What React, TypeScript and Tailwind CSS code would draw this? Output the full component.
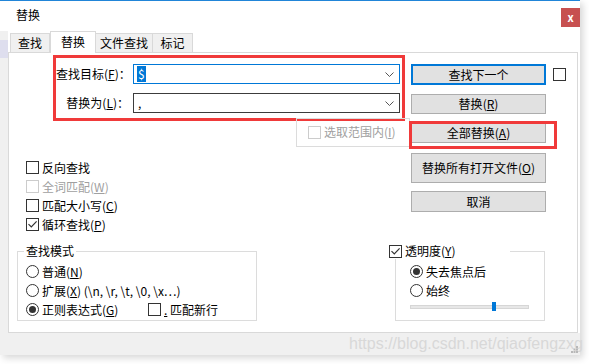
import React from "react";

const U = ({ k }: { k: string }) => (
  <span>
    (<span className="underline">{k}</span>)
  </span>
);

function Box({ checked, disabled }: { checked?: boolean; disabled?: boolean }) {
  return (
    <span
      className={
        disabled
          ? "w-[13px] h-[13px] border border-[#cccccc] bg-white flex items-center justify-center shrink-0"
          : "w-[13px] h-[13px] border border-[#333333] bg-white flex items-center justify-center shrink-0"
      }
    >
      {checked && (
        <svg width="11" height="11" viewBox="0 0 11 11">
          <path d="M1.5 5.2 L4.3 8 L9.6 2.4" stroke="#333333" strokeWidth="1.2" fill="none" />
        </svg>
      )}
    </span>
  );
}

function Radio({ checked }: { checked?: boolean }) {
  return (
    <span className="w-[13px] h-[13px] rounded-full border border-[#333333] bg-white flex items-center justify-center shrink-0">
      {checked && <span className="w-[7px] h-[7px] rounded-full bg-[#333333]" />}
    </span>
  );
}

function Chevron() {
  return (
    <svg width="9" height="5" viewBox="0 0 9 5" className="shrink-0">
      <path d="M0.5 0.5 L4.5 4.5 L8.5 0.5" stroke="#555555" strokeWidth="1" fill="none" />
    </svg>
  );
}

export default function App() {
  return (
    <div
      className="w-[589px] h-[364px] bg-white overflow-hidden text-[12px] leading-[16px] text-black"
      style={{ fontFamily: '"Noto Sans CJK SC", "Noto Sans", sans-serif' }}
    >
      <div className="w-[580px] h-[355px] flex flex-col bg-white border-t border-[#2185d8] shadow-[3px_3px_7px_rgba(0,0,0,0.16)]">
        {/* title bar */}
        <div className="h-[30px] flex justify-between shrink-0">
          <div className="pl-[16px] pt-[6px] text-[12px]">替换</div>
          <div className="mt-[7px] w-[19px] h-[19px] bg-[#c75050] flex items-center justify-center text-white font-bold text-[11px] leading-none">
            x
          </div>
        </div>
        <div className="flex flex-1">
          {/* left frame strip */}
          <div className="w-[8px] bg-[#f0f0f0] shrink-0">
            <div className="mt-[9px] h-[18px] bg-[#dedeee]" />
          </div>
          <div className="w-[572px] flex flex-col">
            {/* tabs */}
            <div className="h-[21px] flex items-end pl-[2px] relative z-10">
              <div className="w-[40px] h-[19px] bg-[#f0f0f0] border border-b-0 border-[#d9d9d9] flex items-center justify-center">
                查找
              </div>
              <div className="w-[46px] h-[22px] -mb-[1px] bg-white border border-b-0 border-[#d9d9d9] flex items-center justify-center pb-[2px]">
                替换
              </div>
              <div className="w-[57px] h-[19px] bg-[#f0f0f0] border border-b-0 border-l-0 border-[#d9d9d9] flex items-center justify-center">
                文件查找
              </div>
              <div className="w-[40px] h-[19px] bg-[#f0f0f0] border border-b-0 border-l-0 border-[#d9d9d9] flex items-center justify-center">
                标记
              </div>
            </div>
            {/* panel */}
            <div className="w-[570px] h-[281px] border border-[#d9d9d9] bg-white flex flex-col">
              <div className="h-[187px] flex">
                {/* left column */}
                <div className="w-[402px] flex flex-col">
                  <div className="ml-[44px] mt-[2px] w-[352px] h-[66px] border-[3px] border-[#f03a3a] flex flex-col pt-[6px] gap-[9px]">
                    <div className="flex items-center">
                      <div className="w-[73px] text-right whitespace-nowrap">
                        查找目标<U k="F" />：
                      </div>
                      <div className="ml-[4px] w-[267px] h-[20px] border border-[#0078d7] flex items-center justify-between pl-[3px] pr-[5px]">
                        <span className="bg-[#0078d7] text-white px-[1px] leading-[16px]">$</span>
                        <Chevron />
                      </div>
                    </div>
                    <div className="flex items-center">
                      <div className="w-[73px] text-right whitespace-nowrap">
                        替换为<U k="L" />：
                      </div>
                      <div className="ml-[4px] w-[267px] h-[20px] border border-[#3c3c3c] flex items-center justify-between pl-[4px] pr-[5px]">
                        <span className="leading-[16px]">,</span>
                        <Chevron />
                      </div>
                    </div>
                  </div>
                  <div className="ml-[287px] -mt-[3px] w-[114px] h-[29px] border border-[#dcdcdc] flex items-start pl-[11px] pt-[7px] gap-[3px]">
                    <Box disabled />
                    <span className="text-[#a0a0a0] -mt-[2px] whitespace-nowrap">
                      选取范围内<U k="I" />
                    </span>
                  </div>
                  <div className="ml-[17px] mt-[11px] flex flex-col">
                    <div className="h-[19px] flex items-center gap-[3px]">
                      <Box />
                      <span>反向查找</span>
                    </div>
                    <div className="h-[19px] flex items-center gap-[3px]">
                      <Box disabled />
                      <span className="text-[#a0a0a0]">
                        全词匹配<U k="W" />
                      </span>
                    </div>
                    <div className="h-[19px] flex items-center gap-[3px]">
                      <Box />
                      <span>
                        匹配大小写<U k="C" />
                      </span>
                    </div>
                    <div className="h-[19px] flex items-center gap-[3px]">
                      <Box checked />
                      <span>
                        循环查找<U k="P" />
                      </span>
                    </div>
                  </div>
                </div>
                {/* right column */}
                <div className="flex flex-col pt-[11px]">
                  <div className="flex items-center">
                    <div className="w-[135px] h-[21px] bg-[#e1e1e1] border-2 border-[#0078d7] flex items-center justify-center">
                      查找下一个
                    </div>
                    <div className="ml-[7px]">
                      <Box />
                    </div>
                  </div>
                  <div className="mt-[9px] w-[135px] h-[20px] bg-[#e1e1e1] border border-[#adadad] flex items-center justify-center">
                    <span>
                      替换<U k="R" />
                    </span>
                  </div>
                  <div className="relative mt-[9px] w-[135px] h-[20px] bg-[#e1e1e1] border border-[#adadad] flex items-center justify-center">
                    <span>
                      全部替换<U k="A" />
                    </span>
                    <div className="absolute -left-[3px] -top-[3px] w-[148px] h-[28px] border-[3px] border-[#f03a3a]" />
                  </div>
                  <div className="mt-[10px] w-[135px] h-[30px] bg-[#e1e1e1] border border-[#adadad] flex items-center justify-center">
                    <span>
                      替换所有打开文件<U k="O" />
                    </span>
                  </div>
                  <div className="mt-[8px] w-[135px] h-[21px] bg-[#e1e1e1] border border-[#adadad] flex items-center justify-center">
                    取消
                  </div>
                </div>
              </div>
              {/* bottom section */}
              <div className="flex">
                <div className="relative ml-[8px] mt-[11px] w-[240px] h-[70px] border border-[#dcdcdc] flex flex-col pt-[10px] pl-[8px]">
                  <div className="absolute left-[6px] -top-[9px] bg-white px-[2px]">查找模式</div>
                  <div className="h-[19px] flex items-center gap-[3px]">
                    <Radio />
                    <span>
                      普通<U k="N" />
                    </span>
                  </div>
                  <div className="h-[19px] flex items-center gap-[3px]">
                    <Radio />
                    <span className="whitespace-nowrap">
                      扩展<U k="X" /> {"(\\n, \\r, \\t, \\0, \\x…)"}
                    </span>
                  </div>
                  <div className="h-[19px] flex items-center">
                    <div className="w-[122px] flex items-center gap-[3px]">
                      <Radio checked />
                      <span>
                        正则表达式<U k="G" />
                      </span>
                    </div>
                    <Box />
                    <span className="ml-[3px]">
                      <span className="underline">.</span> 匹配新行
                    </span>
                  </div>
                </div>
                <div className="relative ml-[138px] mt-[11px] w-[150px] h-[70px] border border-[#dcdcdc] flex flex-col pt-[10px] pl-[14px]">
                  <div className="absolute -left-[7px] -top-[9px] w-[121px] bg-white flex items-center gap-[3px]">
                    <Box checked />
                    <span>
                      透明度<U k="Y" />
                    </span>
                  </div>
                  <div className="h-[19px] flex items-center gap-[3px]">
                    <Radio checked />
                    <span>失去焦点后</span>
                  </div>
                  <div className="h-[19px] flex items-center gap-[3px]">
                    <Radio />
                    <span>始终</span>
                  </div>
                  <div className="relative mt-[2px] h-[9px] w-[119px] flex items-center">
                    <div className="w-[119px] h-[4px] bg-[#e7e7e7] border border-[#d6d6d6]" />
                    <div className="absolute left-[82px] top-0 w-[4px] h-[9px] bg-[#0078d7]" />
                  </div>
                </div>
              </div>
            </div>
            {/* status bar */}
            <div className="relative h-[22px] bg-[#f0f0f0] flex items-center pl-[341px]">
              <span
                className="whitespace-nowrap text-[16px] leading-[20px] text-[#d8d8d8]"
                style={{ fontFamily: '"Liberation Sans", Arial, sans-serif' }}
              >
                https://blog.csdn.net/qiaofengzxg
              </span>
              <svg width="7" height="7" viewBox="0 0 7 7" className="absolute right-[2px] bottom-[2px]">
                <rect x="5" y="0" width="2" height="2" fill="#b8b8b8" />
                <rect x="5" y="5" width="2" height="2" fill="#b8b8b8" />
                <rect x="0" y="5" width="2" height="2" fill="#b8b8b8" />
                <rect x="2.5" y="2.5" width="2" height="2" fill="#b8b8b8" />
                <rect x="5" y="2.5" width="2" height="2" fill="#b8b8b8" />
                <rect x="2.5" y="5" width="2" height="2" fill="#b8b8b8" />
              </svg>
            </div>
          </div>
        </div>
      </div>
    </div>
  );
}
